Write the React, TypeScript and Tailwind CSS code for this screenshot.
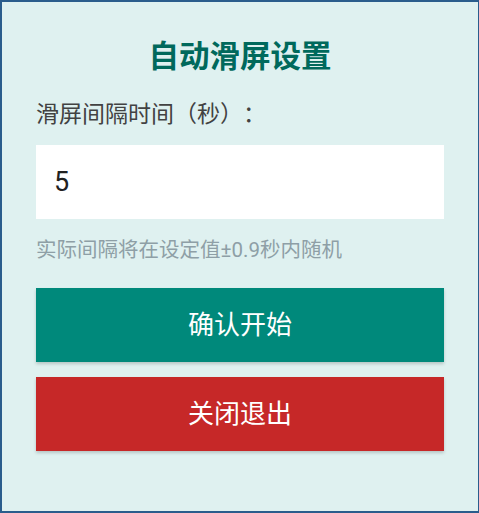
import { useState } from "react";

const font = { fontFamily: 'Roboto, "Noto Sans CJK SC", sans-serif' };

export default function App() {
  const [interval, setInterval] = useState("5");

  return (
    <div className="h-[513px] w-[479px] bg-[#2a5d8c] pl-[2px] pr-[1px] pt-[2px] pb-[2px]" style={font}>
      <div className="flex h-full flex-col bg-[#dff1f0] px-[34px] pt-[35px] [text-spacing-trim:space-all]">
        <h1 className="text-center text-[30.5px] font-bold leading-[40px] text-[#00695c]">自动滑屏设置</h1>

        <label className="mt-[22px] text-[23px] leading-[32px] text-[#424242]">滑屏间隔时间（秒）：</label>

        <input
          className="mt-[14px] h-[74px] w-full bg-white px-[18px] text-[27px] text-[#212121] outline-none"
          value={interval}
          onChange={(e) => setInterval(e.target.value)}
          style={font}
        />

        <p className="mt-[17px] text-[20.5px] leading-[28px] text-[#8e9fa6]">实际间隔将在设定值±0.9秒内随机</p>

        <button className="mt-[24px] h-[74px] w-full bg-[#00897b] text-[26px] text-white shadow-[0_2px_3px_rgba(0,0,0,0.18)]">
          确认开始
        </button>
        <button className="mt-[15px] h-[74px] w-full bg-[#c62828] text-[26px] text-white shadow-[0_2px_3px_rgba(0,0,0,0.18)]">
          关闭退出
        </button>
      </div>
    </div>
  );
}
